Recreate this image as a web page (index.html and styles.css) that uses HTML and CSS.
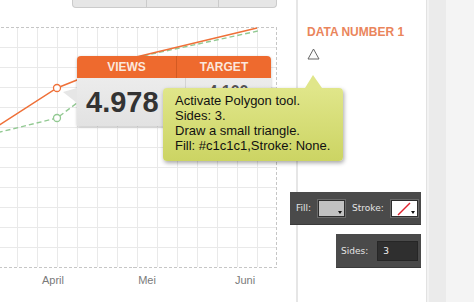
FILE: index.html
```html
<!DOCTYPE html>
<html lang="de">
<head>
  <meta charset="UTF-8">
  <title>Polygon Tutorial</title>
  <link rel="stylesheet" href="styles.css">
</head>
<body>

  <div class="screen">
    <!-- Grafik -->
    <div class="main">
      <div class="toolbar">
        <span class="tb-cell wide"></span>
        <span class="tb-cell mid"></span>
        <span class="tb-cell"></span>
      </div>
      <svg class="chart" width="296" height="294" viewBox="0 8 296 294">
        <g class="grid">
          <line x1="17" y1="27" x2="17" y2="267"/>
          <line x1="37" y1="27" x2="37" y2="267"/>
          <line x1="57" y1="27" x2="57" y2="267"/>
          <line x1="77" y1="27" x2="77" y2="267"/>
          <line x1="97" y1="27" x2="97" y2="267"/>
          <line x1="117" y1="27" x2="117" y2="267"/>
          <line x1="137" y1="27" x2="137" y2="267"/>
          <line x1="157" y1="27" x2="157" y2="267"/>
          <line x1="177" y1="27" x2="177" y2="267"/>
          <line x1="197" y1="27" x2="197" y2="267"/>
          <line x1="217" y1="27" x2="217" y2="267"/>
          <line x1="237" y1="27" x2="237" y2="267"/>
          <line x1="257" y1="27" x2="257" y2="267"/>
          <line x1="0" y1="47" x2="277" y2="47"/>
          <line x1="0" y1="67" x2="277" y2="67"/>
          <line x1="0" y1="87" x2="277" y2="87"/>
          <line x1="0" y1="107" x2="277" y2="107"/>
          <line x1="0" y1="127" x2="277" y2="127"/>
          <line x1="0" y1="147" x2="277" y2="147"/>
          <line x1="0" y1="167" x2="277" y2="167"/>
          <line x1="0" y1="187" x2="277" y2="187"/>
          <line x1="0" y1="207" x2="277" y2="207"/>
          <line x1="0" y1="227" x2="277" y2="227"/>
          <line x1="0" y1="247" x2="277" y2="247"/>
        </g>
        <rect class="frame" x="-4" y="27.5" width="280.5" height="239.5"/>
        <polyline class="line-target" points="-10,134.5 57,118 138,57 258,31"/>
        <polyline class="line-views" points="-10,131 57,88 132,58 257,28"/>
        <circle class="dot-target" cx="57" cy="118" r="3.5"/>
        <circle class="dot-views" cx="57" cy="88" r="3.5"/>
        <text class="month" x="53" y="284">April</text>
        <text class="month" x="147" y="284">Mei</text>
        <text class="month" x="245" y="284">Juni</text>
      </svg>
    </div>

    <!-- Panel rechts -->
    <div class="panel">
      <h4 class="data-title">DATA NUMBER 1</h4>
      <svg class="tri-icon" width="13" height="12" viewBox="0 0 13 12">
        <polygon points="6.5,1 12,11 1,11"/>
      </svg>

      <div class="tool-bar fill-bar">
        <span class="tool-label">Fill:</span>
        <span class="swatch swatch-fill"><i class="drop"></i></span>
        <span class="tool-label">Stroke:</span>
        <span class="swatch swatch-stroke">
          <svg width="25" height="15" viewBox="0 0 25 15"><line x1="6" y1="14" x2="18" y2="2"/></svg>
          <i class="drop"></i>
        </span>
      </div>

      <div class="tool-bar sides-bar">
        <span class="tool-label">Sides:</span>
        <span class="sides-input">3</span>
      </div>
    </div>

    <div class="strip"></div>
    <div class="backdrop"></div>

    <!-- Werte-Popup -->
    <div class="stat-popup">
      <div class="stat-head">
        <span class="stat-col">VIEWS</span>
        <span class="stat-col">TARGET</span>
      </div>
      <div class="stat-body">
        <span class="stat-col big">4.978</span>
        <span class="stat-col small">4.100</span>
      </div>
    </div>

    <!-- Hinweis -->
    <div class="hint">
      Activate Polygon tool.<br>
      Sides: 3.<br>
      Draw a small triangle.<br>
      Fill: #c1c1c1,Stroke: None.
    </div>
  </div>

</body>
</html>
```

FILE: styles.css
```css
body {
  margin: 0;
  font-family: "Liberation Sans", Arial, sans-serif;
  background: #fff;
}

.screen {
  position: relative;
  display: flex;
  width: 474px;
  height: 302px;
  overflow: hidden;
}

/* Grafik */
.main {
  width: 296px;
  flex-shrink: 0;
  border-right: 2px solid #e6e6e6;
}

.toolbar {
  display: flex;
  width: 203px;
  height: 7px;
  margin-left: 72px;
  background: #e6e6e6;
  border: 1px solid #cbcbcb;
  border-top: 0;
  border-radius: 0 0 4px 4px;
}

.tb-cell {
  flex: 1;
}

.tb-cell.wide {
  flex: 0 0 73px;
  border-right: 1px solid #cbcbcb;
}

.tb-cell.mid {
  flex: 0 0 71px;
  border-right: 1px solid #cbcbcb;
}

.chart {
  display: block;
}

.grid line {
  stroke: #e9e9e9;
  stroke-width: 1;
  shape-rendering: crispEdges;
}

.frame {
  fill: none;
  stroke: #c6c6c6;
  stroke-width: 1;
  stroke-dasharray: 3 2;
  shape-rendering: crispEdges;
}

.line-views {
  fill: none;
  stroke: #ef7038;
  stroke-width: 1.4;
}

.line-target {
  fill: none;
  stroke: #92c992;
  stroke-width: 1.4;
  stroke-dasharray: 5 3;
}

.dot-views {
  fill: #fff;
  stroke: #ef7038;
  stroke-width: 1.3;
}

.dot-target {
  fill: #fff;
  stroke: #92c992;
  stroke-width: 1.3;
}

.month {
  font-size: 11px;
  fill: #7a7a7a;
  text-anchor: middle;
}

/* Panel */
.panel {
  width: 123px;
  flex-shrink: 0;
  display: flex;
  flex-direction: column;
  padding: 25px 5px 0 0;
}

.data-title {
  margin: 0 0 9px 9px;
  font-size: 12px;
  line-height: 14px;
  font-weight: bold;
  color: #ea855c;
}

.tri-icon {
  display: block;
  margin-left: 9px;
}

.tri-icon polygon {
  fill: #fbfbfb;
  stroke: #666;
  stroke-width: 1;
}

.tool-bar {
  display: flex;
  align-items: center;
  align-self: flex-end;
  gap: 7px;
  background: #4a4a4a;
  box-shadow: 0 1px 0 #3a3a3a;
  font-family: "DejaVu Sans", Verdana, sans-serif;
  font-size: 9px;
  color: #e4e4e4;
}

.fill-bar {
  width: 125px;
  height: 32px;
  margin-top: 132px;
  margin-right: -8px;
  padding-left: 6px;
  position: relative;
  left: -8px;
}

.sides-bar {
  width: 80px;
  height: 33px;
  margin-top: 10px;
  padding-left: 5px;
  gap: 9px;
}

.swatch {
  position: relative;
  width: 25px;
  height: 15px;
  border: 1px solid #2e2e2e;
  outline: 1px solid #6a6a6a;
}

.swatch-fill {
  background: #c1c1c1;
}

.swatch-stroke {
  background: #fff;
}

.swatch-stroke svg {
  display: block;
}

.swatch-stroke line {
  stroke: #e0222e;
  stroke-width: 1.5;
}

.drop {
  position: absolute;
  right: 2px;
  bottom: 2px;
  border-left: 2.5px solid transparent;
  border-right: 2.5px solid transparent;
  border-top: 3px solid #111;
}

.sides-input {
  width: 34px;
  height: 18px;
  line-height: 18px;
  padding-left: 5px;
  background: #2f2f2f;
  border: 1px solid #262626;
  color: #f2f2f2;
}

.strip {
  width: 19px;
  flex-shrink: 0;
  background: #ebebeb;
  border-left: 1px solid #e2e2e2;
  box-shadow: inset 2px 0 0 #f3f3f3;
}

.backdrop {
  flex: 1;
  background: #f4f4f4;
}

/* Werte-Popup */
.stat-popup {
  position: absolute;
  left: 77px;
  top: 56px;
  width: 194px;
  border-radius: 4px 4px 2px 2px;
  box-shadow: 0 1px 3px rgba(0, 0, 0, 0.25);
}

.stat-popup::before {
  content: "";
  position: absolute;
  left: -14px;
  top: 32px;
  border-top: 4px solid transparent;
  border-bottom: 11px solid transparent;
  border-right: 14px solid #e6e6e6;
}

.stat-head {
  display: flex;
  height: 22px;
  background: #ee6a2e;
  border-radius: 4px 4px 0 0;
}

.stat-head .stat-col {
  color: #fbe7dc;
  font-size: 12px;
  font-weight: bold;
  line-height: 22px;
  text-align: center;
}

.stat-col {
  flex: 0 0 99px;
}

.stat-col + .stat-col {
  flex: 1;
  border-left: 1px solid #d35a22;
}

.stat-body {
  display: flex;
  height: 48px;
  background: linear-gradient(#ececec, #e2e2e2);
}

.stat-body .stat-col + .stat-col {
  border-left-color: #d4d4d4;
}

.big {
  padding-left: 9px;
  font-size: 29px;
  font-weight: bold;
  line-height: 48px;
  color: #333;
}

.small {
  padding-top: 5px;
  text-align: center;
  font-size: 16px;
  font-weight: bold;
  color: #555;
}

/* Hinweis */
.hint {
  position: absolute;
  left: 163px;
  top: 88px;
  width: 168px;
  height: 68px;
  padding: 5px 0 0 12px;
  background: linear-gradient(#e0e68a, #ccd463);
  border-radius: 4px;
  box-shadow: 1px 2px 4px rgba(0, 0, 0, 0.35);
  font-size: 13px;
  line-height: 15px;
  color: #111;
}

.hint::before {
  content: "";
  position: absolute;
  left: 142px;
  top: -13px;
  border-left: 8px solid transparent;
  border-right: 9px solid transparent;
  border-bottom: 13px solid #e0e68a;
}
```
